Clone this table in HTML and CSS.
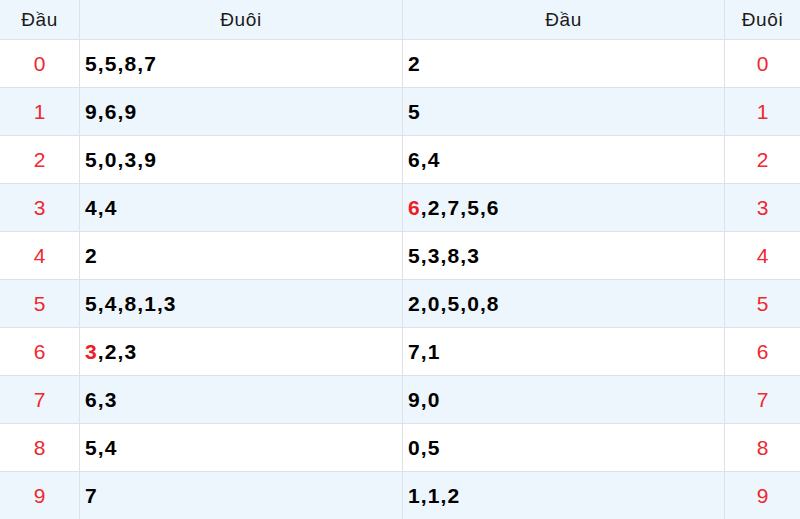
FILE: index.html
```html
<!DOCTYPE html>
<html>
<head>
<meta charset="utf-8">
<link rel="stylesheet" href="styles.css">
</head>
<body>
<table class="lt">
  <thead>
    <tr><th class="c1">Đầu</th><th class="c2">Đuôi</th><th class="c3">Đầu</th><th class="c4">Đuôi</th></tr>
  </thead>
  <tbody>
    <tr><td class="num">0</td><td class="val">5,5,8,7</td><td class="val">2</td><td class="num">0</td></tr>
    <tr><td class="num">1</td><td class="val">9,6,9</td><td class="val">5</td><td class="num">1</td></tr>
    <tr><td class="num">2</td><td class="val">5,0,3,9</td><td class="val">6,4</td><td class="num">2</td></tr>
    <tr><td class="num">3</td><td class="val">4,4</td><td class="val"><span class="hl">6</span>,2,7,5,6</td><td class="num">3</td></tr>
    <tr><td class="num">4</td><td class="val">2</td><td class="val">5,3,8,3</td><td class="num">4</td></tr>
    <tr><td class="num">5</td><td class="val">5,4,8,1,3</td><td class="val">2,0,5,0,8</td><td class="num">5</td></tr>
    <tr><td class="num">6</td><td class="val"><span class="hl">3</span>,2,3</td><td class="val">7,1</td><td class="num">6</td></tr>
    <tr><td class="num">7</td><td class="val">6,3</td><td class="val">9,0</td><td class="num">7</td></tr>
    <tr><td class="num">8</td><td class="val">5,4</td><td class="val">0,5</td><td class="num">8</td></tr>
    <tr><td class="num">9</td><td class="val">7</td><td class="val">1,1,2</td><td class="num">9</td></tr>
  </tbody>
</table>
</body>
</html>
```
FILE: styles.css
```css
html, body { margin: 0; padding: 0; background: #fff; }
body { font-family: "Liberation Sans", Arial, sans-serif; color: #111; }
.lt { width: 800px; border-collapse: collapse; table-layout: fixed; }
.lt th, .lt td { border: 1px solid #dde2e8; padding: 0; }
.lt tr > :first-child { border-left: none; }
.lt tr > :last-child { border-right: none; }
.lt thead th { border-top: none; height: 39px; background: #eef6fd; font-weight: 400; font-size: 19px; letter-spacing: 0.6px; color: #1a1a1a; text-align: center; }
.c1 { width: 79px; }
.c2 { width: 322px; }
.c3 { width: 321px; }
.c4 { width: 75px; }
.lt tbody td { height: 47px; }
.lt tbody tr:nth-child(even) td { background: #eef6fd; }
.num { text-align: center; color: #f0282d; font-size: 21px; }
.val { font-weight: 700; font-size: 21px; letter-spacing: 1.1px; padding-left: 5px !important; color: #000; }
.hl { color: #ee1c25; }
```
